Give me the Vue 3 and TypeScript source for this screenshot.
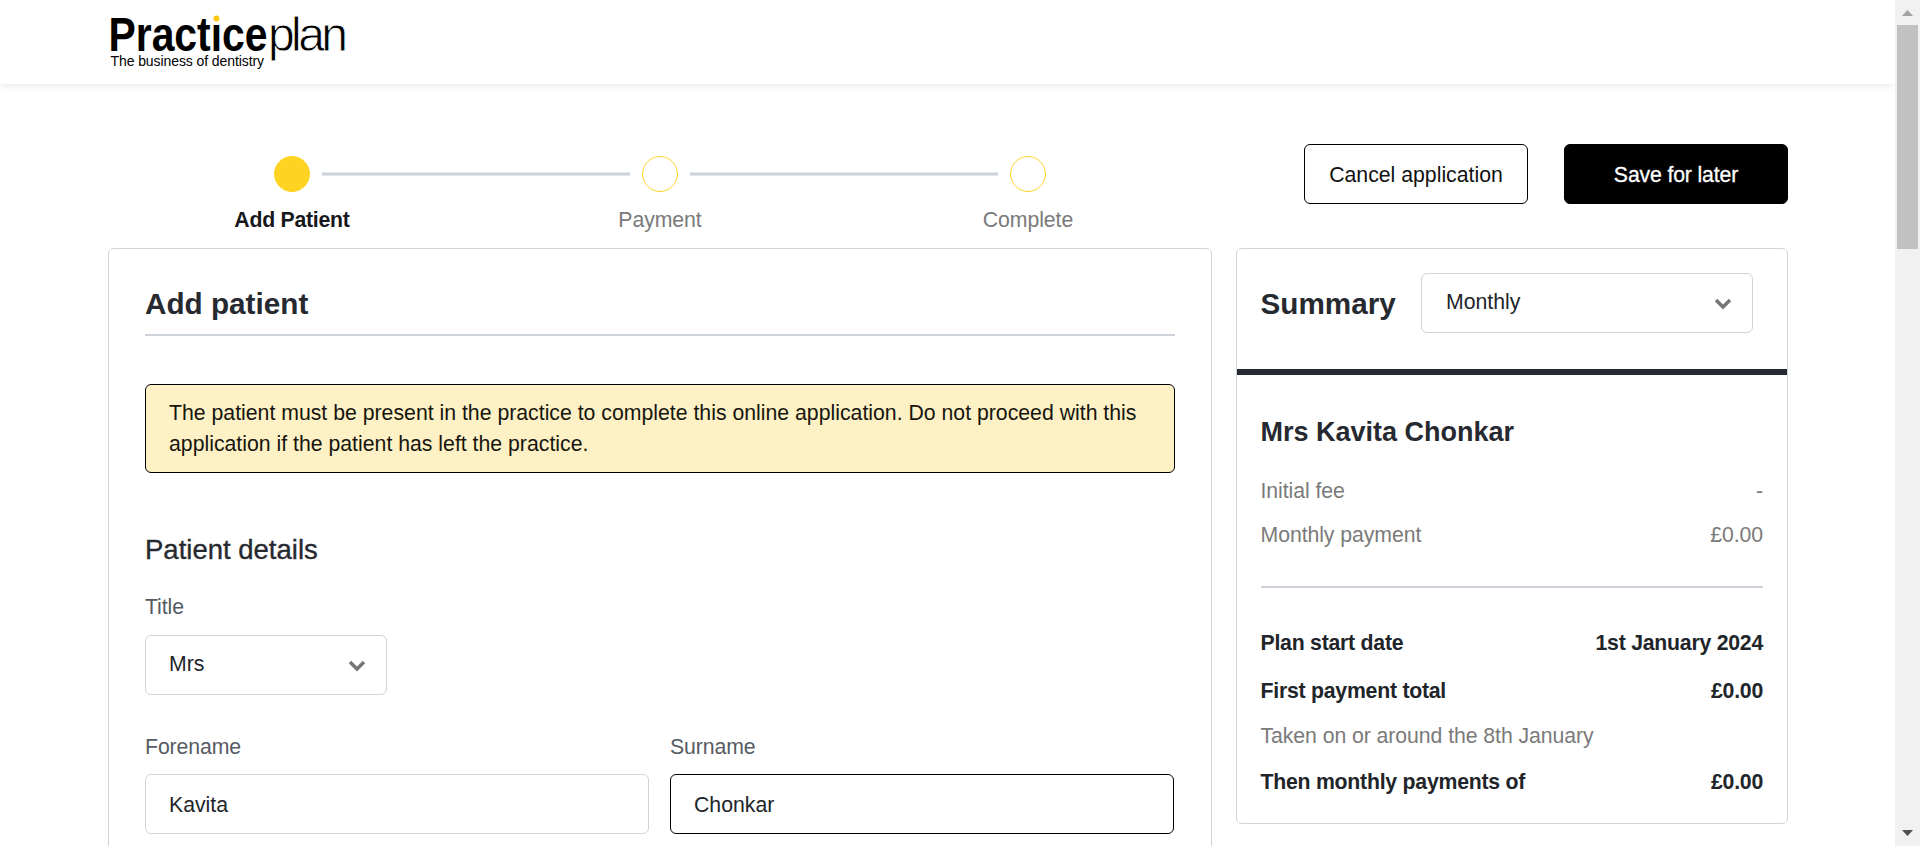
<script setup lang="ts">
import { ref } from 'vue'

interface Step {
  label: string
  active: boolean
}

interface Row {
  label: string
  value: string
  strong: boolean
}

const steps: Step[] = [
  { label: 'Add Patient', active: true },
  { label: 'Payment', active: false },
  { label: 'Complete', active: false },
]

const fees: Row[] = [
  { label: 'Initial fee', value: '-', strong: false },
  { label: 'Monthly payment', value: '£0.00', strong: false },
]

const totals: Row[] = [
  { label: 'Plan start date', value: '1st January 2024', strong: true },
  { label: 'First payment total', value: '£0.00', strong: true },
  { label: 'Taken on or around the 8th January', value: '', strong: false },
  { label: 'Then monthly payments of', value: '£0.00', strong: true },
]

const title = ref('Mrs')
const forename = ref('Kavita')
const surname = ref('Chonkar')
const frequency = ref('Monthly')
</script>

<template>
  <div class="window">
    <div class="page">
      <header class="topbar">
        <svg class="logo" width="240" height="60" viewBox="0 0 240 60" role="img" aria-label="Practiceplan">
          <text class="logo-bold" x="-1.5" y="38.5" textLength="159" lengthAdjust="spacingAndGlyphs">Practice</text>
          <text class="logo-light" x="158" y="38.5" textLength="80" lengthAdjust="spacing">plan</text>
          <rect x="101" y="1" width="10.5" height="9.8" fill="#fff" />
          <circle cx="106.4" cy="6.5" r="3" fill="#fdc70c" />
          <text class="logo-tag" x="0.5" y="54" textLength="153.5" lengthAdjust="spacing">The business of dentistry</text>
        </svg>
      </header>

      <div class="layout">
        <nav class="stepper">
          <div v-for="(step, i) in steps" :key="step.label" class="step">
            <div class="track">
              <span class="line before" :class="{ hidden: i === 0 }"></span>
              <span class="dot" :class="{ active: step.active }"></span>
              <span class="line after" :class="{ hidden: i === steps.length - 1 }"></span>
            </div>
            <span class="step-label" :class="{ active: step.active }">{{ step.label }}</span>
          </div>
        </nav>

        <div class="actions">
          <button class="btn outline" type="button">Cancel application</button>
          <button class="btn solid" type="button">Save for later</button>
        </div>

        <main class="card form-card">
          <h2 class="form-title">Add patient</h2>
          <p class="notice">
            The patient must be present in the practice to complete this online application. Do not proceed with this
            application if the patient has left the practice.
          </p>
          <h3>Patient details</h3>
          <div class="field title-field">
            <span class="label">Title</span>
            <div class="select">
              <span>{{ title }}</span>
              <svg width="18" height="12" viewBox="0 0 18 12"><path d="M2 2 L9 9 L16 2" /></svg>
            </div>
          </div>
          <div class="names">
            <div class="field">
              <span class="label">Forename</span>
              <div class="input">{{ forename }}</div>
            </div>
            <div class="field">
              <span class="label">Surname</span>
              <div class="input focused">{{ surname }}</div>
            </div>
          </div>
        </main>

        <aside class="card summary">
          <div class="summary-head">
            <h2>Summary</h2>
            <div class="select frequency">
              <span>{{ frequency }}</span>
              <svg width="18" height="12" viewBox="0 0 18 12"><path d="M2 2 L9 9 L16 2" /></svg>
            </div>
          </div>
          <div class="summary-body">
            <h4>Mrs Kavita Chonkar</h4>
            <div class="fees">
              <div v-for="row in fees" :key="row.label" class="row">
                <span>{{ row.label }}</span><span>{{ row.value }}</span>
              </div>
            </div>
            <div class="totals">
              <div v-for="row in totals" :key="row.label" class="row" :class="{ strong: row.strong }">
                <span>{{ row.label }}</span><span>{{ row.value }}</span>
              </div>
            </div>
          </div>
        </aside>
      </div>
    </div>

    <div class="scrollbar">
      <svg width="25" height="25" viewBox="0 0 25 25"><path d="M7 16 L12.5 10 L18 16 Z" fill="#a3a3a3" /></svg>
      <div class="thumb"></div>
      <svg class="down" width="25" height="25" viewBox="0 0 25 25"><path d="M7 9 L12.5 15 L18 9 Z" fill="#505050" /></svg>
    </div>
  </div>
</template>

<style>
html,
body {
  margin: 0;
  overflow: hidden;
  background: #fff;
}
</style>

<style scoped>
* {
  box-sizing: border-box;
}

.window {
  display: flex;
  width: 100%;
  height: 846px;
  overflow: hidden;
  font-family: 'Liberation Sans', Arial, sans-serif;
  font-size: 21.25px;
  line-height: 30px;
  color: #212529;
  background: #fff;
}

.page {
  flex: 1;
  overflow: hidden;
}

.topbar {
  height: 84px;
  padding: 12px 0 0 110px;
  box-shadow: 0 2px 8px rgba(0, 0, 0, 0.09);
}

.logo {
  display: block;
  overflow: visible;
}

.logo-bold {
  font-size: 48px;
  font-weight: 700;
}

.logo-light {
  font-size: 48px;
  stroke: #fff;
  stroke-width: 0.8px;
}

.logo-tag {
  font-size: 14px;
}

.layout {
  display: grid;
  grid-template-columns: 1104px 552px;
  grid-template-rows: 164px auto;
  column-gap: 24px;
  padding-left: 108px;
  align-items: start;
}

.stepper {
  display: grid;
  grid-template-columns: repeat(3, 1fr);
  padding-top: 72px;
}

.step {
  text-align: center;
}

.track {
  display: flex;
  align-items: center;
  gap: 12px;
  margin-bottom: 13px;
}

.dot {
  width: 36px;
  height: 36px;
  border: 1.5px solid #ffd321;
  border-radius: 50%;
}

.dot.active {
  background: #ffd321;
}

.line {
  flex: 1;
  height: 4px;
  background: #cfd4db;
  border: solid #e3e6ea;
  border-width: 1px 0;
}

.line.hidden {
  visibility: hidden;
}

.step-label {
  display: block;
  color: #7a7a7a;
  letter-spacing: -0.08px;
}

.step-label.active {
  color: #16181b;
  font-weight: 700;
  letter-spacing: -0.25px;
}

.actions {
  display: flex;
  justify-content: flex-end;
  gap: 36px;
  padding-top: 60px;
}

.btn {
  width: 224px;
  height: 60px;
  padding: 2px 0 0;
  font: inherit;
  border: 1px solid #000;
  border-radius: 6px;
}

.outline {
  color: #111;
  background: #fff;
}

.solid {
  color: #fff;
  letter-spacing: -0.15px;
  background: #000;
  -webkit-text-stroke: 0.3px #fff;
}

.card {
  border: 1px solid #cfd4db;
  border-radius: 6px;
}

h2,
h3,
h4,
p {
  margin: 0;
}

h2 {
  color: #262a30;
  font-size: 29.7px;
  line-height: 36px;
}

.form-card {
  height: 700px;
  padding: 37px 36px 0;
}

.form-title {
  padding-bottom: 12px;
  border-bottom: 2px solid #cfd4db;
}

.notice {
  height: 89px;
  margin-top: 48px;
  padding: 13px 23px 0;
  color: #16160f;
  line-height: 31px;
  background: #fef1c5;
  border: 1px solid #000;
  border-radius: 6px;
}

h3 {
  margin-top: 60px;
  color: #262a30;
  font-size: 27.5px;
  font-weight: 400;
  line-height: 34px;
  -webkit-text-stroke: 0.35px #262a30;
}

.title-field {
  width: 242px;
  margin-top: 25px;
}

.label {
  display: block;
  margin-bottom: 12px;
  color: #555b63;
  letter-spacing: -0.1px;
}

.title-field .label {
  margin-bottom: 13px;
}

.select,
.input {
  display: flex;
  align-items: center;
  height: 60px;
  padding: 1px 23px 0;
  border: 1px solid #cfd4db;
  border-radius: 6px;
}

.select {
  justify-content: space-between;
  padding: 0 20px 3px 23px;
}

.select svg {
  position: relative;
  top: 2px;
  fill: none;
  stroke: #757575;
  stroke-width: 3.4;
}

.input.focused {
  border-color: #000;
}

.names {
  display: grid;
  grid-template-columns: 504px 504px;
  gap: 21px;
  margin-top: 37px;
}

.summary-head {
  display: flex;
  align-items: center;
  justify-content: space-between;
  padding: 24px 34px 36px 23.5px;
  border-bottom: 6px solid #272b31;
}

.summary-head h2 {
  padding-top: 2px;
}

.frequency {
  width: 332px;
  padding-left: 24px;
}

.summary-body {
  padding: 40px 24px 26px;
}

h4 {
  margin-left: -0.5px;
  color: #262a30;
  font-size: 27px;
  line-height: 34px;
}

.row {
  display: flex;
  justify-content: space-between;
  margin-left: -0.5px;
  color: #7a7a7a;
  letter-spacing: -0.07px;
}

.row.strong {
  color: #212529;
  font-weight: 700;
  letter-spacing: -0.24px;
}

.fees {
  display: grid;
  gap: 14px;
  margin-top: 27px;
  padding-bottom: 36px;
  border-bottom: 2px solid #cfd4db;
}

.totals {
  display: grid;
  grid-template-rows: 31px 30px 30px 30px;
  gap: 16px;
  padding-top: 40px;
}

.totals .row:nth-child(2) {
  padding-top: 1px;
}

.scrollbar {
  display: flex;
  flex-direction: column;
  width: 25px;
  background: #f1f1f1;
}

.scrollbar svg {
  display: block;
}

.thumb {
  height: 224px;
  margin: 0 2px;
  background: #c1c1c1;
}

.down {
  margin-top: auto;
}
</style>
